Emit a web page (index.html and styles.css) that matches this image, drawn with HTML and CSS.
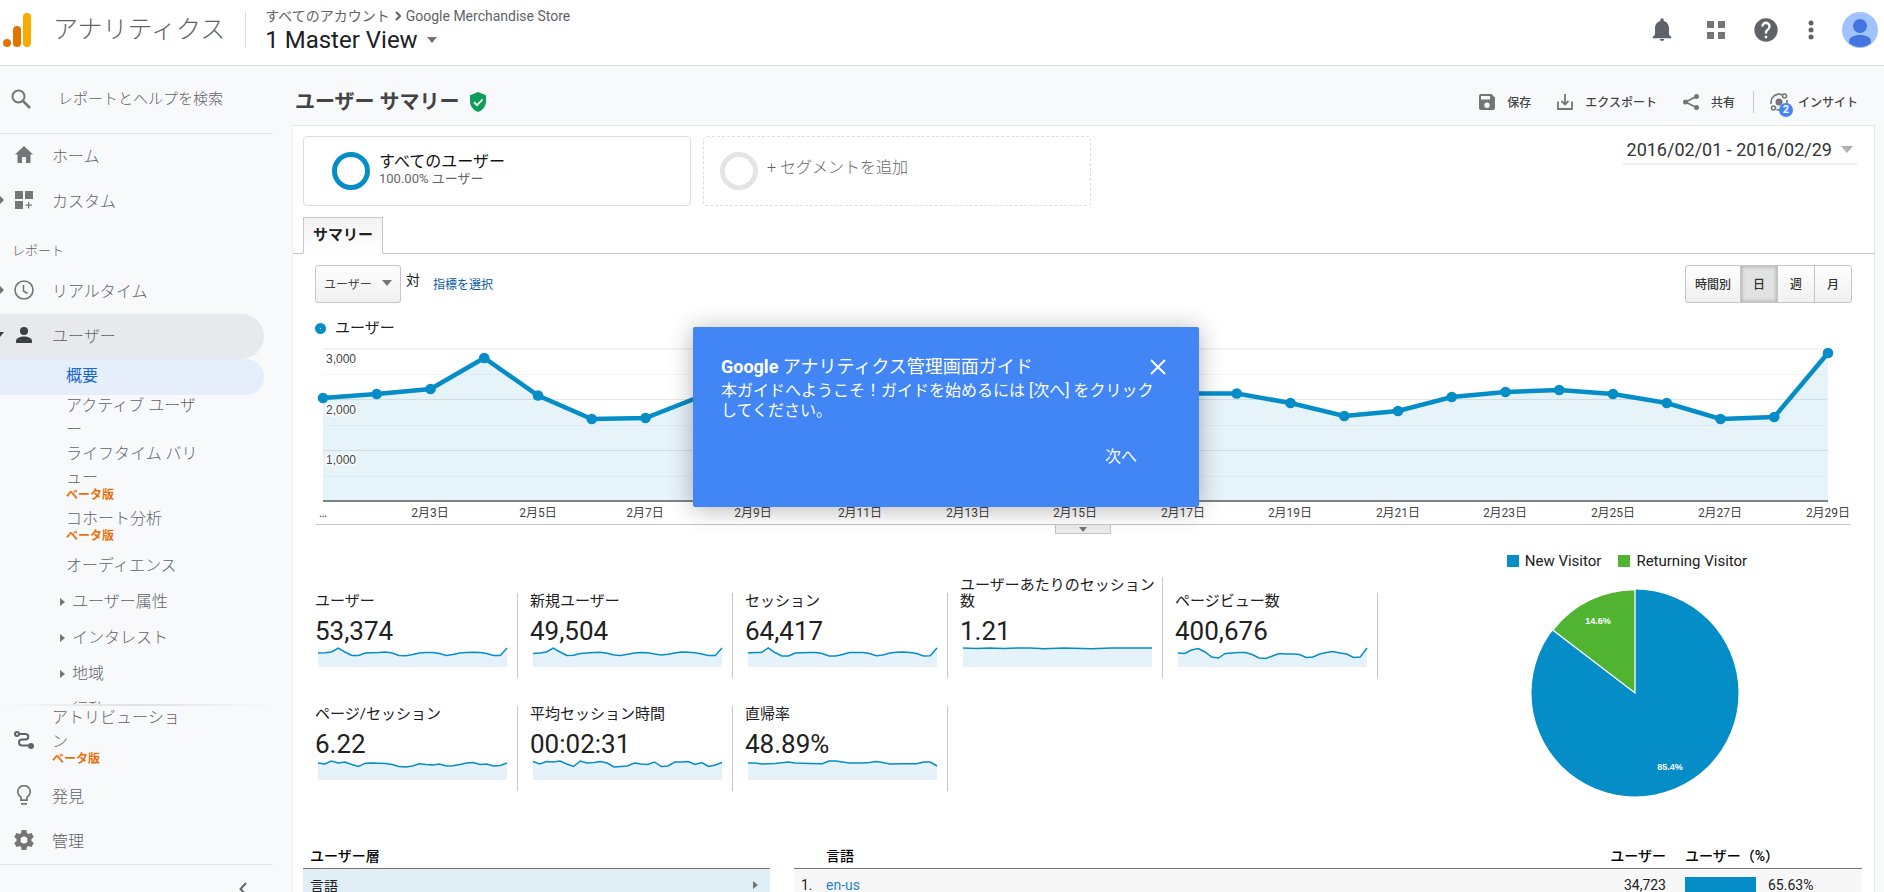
FILE: index.html
```html
<!DOCTYPE html>
<html lang="ja">
<head>
<meta charset="utf-8">
<title>アナリティクス</title>
<link rel="stylesheet" href="styles.css">
</head>
<body>
<header class="topbar">
  <svg class="logo" width="28" height="34" viewBox="0 0 28 34" aria-hidden="true"><rect x="20" y="0" width="8" height="34" rx="4" fill="#f9ab00"/><rect x="10" y="13" width="8" height="21" rx="4" fill="#e37400"/><circle cx="4" cy="30" r="4" fill="#e37400"/></svg>
  <span class="wordmark">アナリティクス</span>
  <div class="account">
    <div class="crumbs"><span>すべてのアカウント</span><svg width="6" height="10" viewBox="0 0 6 10"><path d="M1 1l4 4-4 4" fill="none" stroke="#5f6368" stroke-width="2"/></svg><span>Google Merchandise Store</span></div>
    <button class="view">1 Master View<i class="caret"></i></button>
  </div>
  <div class="top-actions">
    <button aria-label="通知"><svg width="28" height="28" viewBox="0 0 24 24"><path d="M12 21.5c1 0 1.900-.8 1.900-1.700h-3.800c0 .9.900 1.700 1.900 1.700zM18 16v-5.500c0-3.100-1.600-5.600-4.500-6.300v-.7a1.500 1.500 0 0 0-3 0v.7C7.600 4.900 6 7.400 6 10.500V16l-2 2v1h16v-1z"/></svg></button>
    <button aria-label="アプリ"><svg width="18" height="18" viewBox="0 0 18 18"><path d="M0 0h7v7H0zM11 0h7v7h-7zM0 11h7v7H0zM11 11h7v7h-7z" fill="#757575"/></svg></button>
    <button aria-label="ヘルプ"><svg width="28" height="28" viewBox="0 0 24 24"><path d="M12 2a10 10 0 1 0 0 20 10 10 0 0 0 0-20zm1 17h-2v-2h2zm2.070-7.750l-.9.920C13.450 12.900 13 13.500 13 15h-2v-.5c0-1.100.45-2.100 1.170-2.830l1.240-1.260A2 2 0 1 0 10 9H8a4 4 0 1 1 7.070 2.250z"/></svg></button>
    <button aria-label="メニュー"><svg width="6" height="20" viewBox="0 0 6 20"><circle cx="3" cy="3" r="2.500"/><circle cx="3" cy="10" r="2.500"/><circle cx="3" cy="17" r="2.500"/></svg></button>
    <button aria-label="アカウント"><svg width="36" height="36" viewBox="0 0 36 36"><circle cx="18" cy="18" r="18" fill="#a0c3ff"/><circle cx="18" cy="14" r="7" fill="#4374e0"/><path d="M7 30c0-5 5-7 11-7s11 2 11 7v1a17 17 0 0 1-22 0z" fill="#4374e0"/></svg></button>
  </div>
</header>
<div class="shell">
  <nav class="sidebar">
    <label class="search"><svg width="20" height="20" viewBox="0 0 20 20"><g fill="none" stroke="#757575" stroke-width="2"><circle cx="7.500" cy="7.500" r="6"/><path d="M12 12l7 7" stroke-width="2.500"/></g></svg><input type="text" placeholder="レポートとヘルプを検索"></label>
    <div class="nav-list">
      <a class="item" href="#"><i class="exp"></i><span class="ico"><svg width="18" height="17" viewBox="0 0 18 17"><path d="M9 0L0 8.500h2.500V17h4.500v-6h4v6h4.500V8.500H18z"/></svg></span>ホーム</a>
      <a class="item" href="#"><i class="exp right"></i><span class="ico"><svg width="18" height="18" viewBox="0 0 18 18"><path d="M0 0h8v8H0zM10 0h8v8h-8zM0 10h8v8H0zM13 11h1.200v2.500H17V14.700h-2.800v2.800H13v-2.800h-2.500v-1.200H13z"/></svg></span>カスタム</a>
      <div class="group">レポート</div>
      <a class="item" href="#"><i class="exp right"></i><span class="ico"><svg width="20" height="20" viewBox="0 0 20 20"><g fill="none" stroke="#757575"><circle cx="10" cy="10" r="9" stroke-width="1.600"/><path d="M9.500 5v6l4 2.500" stroke-width="1.500"/></g></svg></span>リアルタイム</a>
      <a class="item open" href="#"><i class="exp down"></i><span class="ico"><svg width="16" height="16" viewBox="0 0 16 16"><circle cx="8" cy="4" r="4" fill="#3c4043"/><path d="M0 16v-2c0-2.800 4-4.500 8-4.500s8 1.700 8 4.500v2z" fill="#3c4043"/></svg></span>ユーザー</a>
      <a class="sub current" href="#">概要</a>
      <a class="sub tall first" href="#">アクティブ ユーザー</a>
      <a class="sub tall" href="#">ライフタイム バリュー<span class="beta">ベータ版</span></a>
      <a class="sub tall beta-gap" href="#">コホート分析<span class="beta">ベータ版</span></a>
      <a class="sub beta-gap" href="#">オーディエンス</a>
      <a class="sub more" href="#"><i class="tri"></i>ユーザー属性</a>
      <a class="sub more" href="#"><i class="tri"></i>インタレスト</a>
      <a class="sub more" href="#"><i class="tri"></i>地域</a>
      <a class="sub more" href="#"><i class="tri"></i>行動</a>
    </div>
    <div class="nav-foot">
      <a class="item attribution" href="#"><i class="exp"></i><span class="ico"><svg width="20" height="18" viewBox="0 0 20 18"><g fill="none" stroke="#5f6368" stroke-width="2"><circle cx="3" cy="3" r="2"/><path d="M5 3h6.500a2.500 2.500 0 0 1 0 5.500H8a3 3 0 0 0 0 6h8"/></g><circle cx="17" cy="15" r="3" fill="#5f6368"/></svg></span><span class="wrap">アトリビューション<span class="beta">ベータ版</span></span></a>
      <a class="item" href="#"><i class="exp"></i><span class="ico"><svg width="14" height="20" viewBox="0 0 14 20"><path d="M4 15.200v-3A6.200 6.200 0 1 1 10 12.200v3zM4 18.800h6" fill="none" stroke="#757575" stroke-width="1.700"/></svg></span>発見</a>
      <a class="item" href="#"><i class="exp"></i><span class="ico"><svg width="24" height="24" viewBox="0 0 24 24"><path d="M19.430 12.980c.04-.32.070-.64.070-.98s-.03-.66-.07-.98l2.110-1.650c.19-.15.24-.42.120-.64l-2-3.460c-.12-.22-.39-.3-.61-.22l-2.490 1c-.52-.4-1.080-.73-1.690-.98l-.38-2.650A.49.490 0 0 0 14 2h-4c-.25 0-.46.180-.49.420l-.38 2.650c-.61.25-1.170.59-1.690.98l-2.490-1c-.23-.09-.49 0-.61.220l-2 3.460c-.13.220-.07.490.12.640l2.110 1.650c-.04.32-.07.650-.07.980s.03.660.07.980l-2.110 1.650c-.19.150-.24.420-.12.640l2 3.460c.12.220.39.300.61.220l2.490-1c.52.400 1.080.730 1.690.980l.38 2.650c.03.240.24.420.49.420h4c.25 0 .46-.18.49-.42l.38-2.650c.61-.25 1.170-.59 1.690-.98l2.490 1c.23.090.49 0 .61-.22l2-3.460c.12-.22.070-.49-.12-.64zM12 15.500a3.500 3.500 0 1 1 0-7 3.500 3.500 0 0 1 0 7z"/></svg></span>管理</a>
      <button class="collapse" aria-label="折りたたむ"><svg width="8" height="14" viewBox="0 0 8 14"><path d="M7 1L1.500 7 7 13" fill="none" stroke="#5f6368" stroke-width="2"/></svg></button>
    </div>
  </nav>
  <main class="main">
    <div class="titlebar">
      <h1>ユーザー サマリー</h1>
      <svg width="16" height="20" viewBox="0 0 16 20"><path d="M8 0l8 3.200v6.300C16 14.500 12.500 18.500 8 20c-4.500-1.500-8-5.500-8-10.500V3.200z" fill="#0f9d58"/><path d="M4 10.200l3 3 5.500-5.700" fill="none" stroke="#fff" stroke-width="1.800"/></svg>
      <div class="tools">
        <button><svg width="16" height="16" viewBox="0 0 16 16"><path fill-rule="evenodd" d="M2 0h10.500L16 3.500V14a2 2 0 0 1-2 2H2a2 2 0 0 1-2-2V2a2 2 0 0 1 2-2zm0 2v3.500h9V2zm6 6.500a2.700 2.700 0 1 0 0 5.400 2.700 2.700 0 0 0 0-5.400z"/></svg>保存</button>
        <button><svg width="16" height="16" viewBox="0 0 16 16"><path d="M1 7.500V15h14V7.500M8 0v10.500M4.500 7L8 10.500 11.500 7" fill="none" stroke="#757575" stroke-width="1.800"/></svg>エクスポート</button>
        <button><svg width="16" height="16" viewBox="0 0 16 16"><path d="M13.500 2.500L2.500 8l11 5.500" fill="none" stroke="#757575" stroke-width="1.600"/><circle cx="13.500" cy="2.500" r="2.500"/><circle cx="2.500" cy="8" r="2.500"/><circle cx="13.500" cy="13.500" r="2.500"/></svg>共有</button>
        <button class="insight"><span class="pulse"><svg width="18" height="18" viewBox="0 0 18 18"><circle cx="9" cy="9" r="3.500"/><g fill="none" stroke="#757575" stroke-width="1.600"><path d="M12 1.800A8 8 0 0 0 1.200 11M6.500 16.500A8 8 0 0 0 16.800 7"/><circle cx="14.500" cy="3" r="2"/><circle cx="3.500" cy="15" r="2"/></g></svg><b>2</b></span>インサイト</button>
      </div>
    </div>
    <div class="panel">
      <div class="segments">
        <button class="segment"><i class="ring"></i><span class="seg-name">すべてのユーザー<small>100.00% ユーザー</small></span></button>
        <button class="segment add"><i class="ring"></i><span>+ セグメントを追加</span></button>
        <button class="dates">2016/02/01 - 2016/02/29<i class="caret"></i></button>
      </div>
      <div class="tabs"><button class="tab">サマリー</button></div>
      <div class="controls">
        <button class="metric-pick">ユーザー<i class="caret"></i></button>
        <span class="versus">対</span>
        <a class="pick" href="#">指標を選択</a>
        <div class="grain"><button>時間別</button><button class="on">日</button><button>週</button><button>月</button></div>
      </div>
      <div class="legend"><i></i>ユーザー</div>
      <svg class="chart" viewBox="0 0 1534 186" role="img" aria-label="ユーザー">
        <defs><marker id="dot" markerUnits="userSpaceOnUse" markerWidth="12" markerHeight="12" refX="6" refY="6"><circle cx="6" cy="6" r="5.300" fill="#058dc7"/></marker></defs>
        <path d="M7 11H1512" stroke="#f2f2f2" stroke-width="2"/>
        <path d="M7 36.500H1512M7 87.500H1512M7 138.500H1512" stroke="#f6f6f6"/>
        <path d="M7 61.500H1512M7 112.500H1512" stroke="#e6e6e6"/>
        <path d="M7 60L60.750 56 114.500 51 168.250 20 222 57.500 275.750 81 329.500 80 383.250 59 437 58 490.750 57 544.500 56 598.250 62 652 76 705.750 77 759.500 68 813.250 59 867 55.500 920.750 55.500 974.500 65 1028.250 78 1082 73 1135.750 59 1189.500 54 1243.250 52 1297 56 1350.750 65 1404.500 81 1458.250 79 1512 15V163H7z" fill="#058dc7" fill-opacity=".1"/>
        <path d="M7 163H1512" stroke="#7c8285" stroke-width="2"/>
        <polyline points="7,60 60.750,56 114.500,51 168.250,20 222,57.500 275.750,81 329.500,80 383.250,59 437,58 490.750,57 544.500,56 598.250,62 652,76 705.750,77 759.500,68 813.250,59 867,55.500 920.750,55.500 974.500,65 1028.250,78 1082,73 1135.750,59 1189.500,54 1243.250,52 1297,56 1350.750,65 1404.500,81 1458.250,79 1512,15" fill="none" stroke="#058dc7" stroke-width="4.500" marker-start="url(#dot)" marker-mid="url(#dot)" marker-end="url(#dot)"/>
        <g class="ylab"><text x="10" y="25">3,000</text><text x="10" y="76">2,000</text><text x="10" y="126">1,000</text></g>
        <g class="xlab"><text x="7" y="179">…</text><text x="114" y="179">2月3日</text><text x="222" y="179">2月5日</text><text x="329" y="179">2月7日</text><text x="437" y="179">2月9日</text><text x="544" y="179">2月11日</text><text x="652" y="179">2月13日</text><text x="759" y="179">2月15日</text><text x="867" y="179">2月17日</text><text x="974" y="179">2月19日</text><text x="1082" y="179">2月21日</text><text x="1189" y="179">2月23日</text><text x="1297" y="179">2月25日</text><text x="1404" y="179">2月27日</text><text x="1512" y="179">2月29日</text></g>
      </svg>
      <div class="fold"><button aria-label="展開"><i class="caret"></i></button></div>
      <div class="overview">
        <div class="cards">
          <div class="card"><h2>ユーザー</h2><strong>53,374</strong><svg viewBox="0 0 28 20" preserveAspectRatio="none"><path class="area" d="M0 6L1 5.700 2 5 3 1 4 5 5 8.500 6 8.500 7 6 8 5.800 9 5.500 10 5 11 6 12 8.500 13 8.700 14 7.500 15 6 16 5.500 17 5.500 18 6.500 19 8.500 20 7.500 21 6 22 5.500 23 5.200 24 5.500 25 6.500 26 8.500 27 8.500 28 1V20H0z"/><path class="line" d="M0 6L1 5.700 2 5 3 1 4 5 5 8.500 6 8.500 7 6 8 5.800 9 5.500 10 5 11 6 12 8.500 13 8.700 14 7.500 15 6 16 5.500 17 5.500 18 6.500 19 8.500 20 7.500 21 6 22 5.500 23 5.200 24 5.500 25 6.500 26 8.500 27 8.500 28 1"/></svg></div>
          <div class="card"><h2>新規ユーザー</h2><strong>49,504</strong><svg viewBox="0 0 28 20" preserveAspectRatio="none"><path class="area" d="M0 6.500L1 6 2 5 3 1 4 5 5 8.500 6 8.200 7 6.500 8 6 9 5.500 10 5.200 11 6.300 12 8 13 8.500 14 7.300 15 6 16 5.500 17 5.700 18 7 19 8 20 7.200 21 6 22 5 23 5.200 24 5.800 25 7 26 8.500 27 8.500 28 1V20H0z"/><path class="line" d="M0 6.500L1 6 2 5 3 1 4 5 5 8.500 6 8.200 7 6.500 8 6 9 5.500 10 5.200 11 6.300 12 8 13 8.500 14 7.300 15 6 16 5.500 17 5.700 18 7 19 8 20 7.200 21 6 22 5 23 5.200 24 5.800 25 7 26 8.500 27 8.500 28 1"/></svg></div>
          <div class="card"><h2>セッション</h2><strong>64,417</strong><svg viewBox="0 0 28 20" preserveAspectRatio="none"><path class="area" d="M0 6L1 5.500 2 5.500 3 1 4 5.500 5 9 6 9 7 6 8 5.800 9 5.500 10 5.500 11 6.500 12 9 13 9 14 7.500 15 5.500 16 5.500 17 5.500 18 6.500 19 8.700 20 8 21 6 22 5.300 23 5 24 5.500 25 6.500 26 9 27 8.700 28 1V20H0z"/><path class="line" d="M0 6L1 5.500 2 5.500 3 1 4 5.500 5 9 6 9 7 6 8 5.800 9 5.500 10 5.500 11 6.500 12 9 13 9 14 7.500 15 5.500 16 5.500 17 5.500 18 6.500 19 8.700 20 8 21 6 22 5.300 23 5 24 5.500 25 6.500 26 9 27 8.700 28 1"/></svg></div>
          <div class="card"><h2>ユーザーあたりのセッション数</h2><strong>1.21</strong><svg viewBox="0 0 28 20" preserveAspectRatio="none"><path class="area" d="M0 1L2 1.500 4 1 6 1.500 8 1 10 1 12 1.700 15 1 19 1.700 22 1H28V20H0z"/><path class="line" d="M0 1L2 1.500 4 1 6 1.500 8 1 10 1 12 1.700 15 1 19 1.700 22 1H28"/></svg></div>
          <div class="card"><h2>ページビュー数</h2><strong>400,676</strong><svg viewBox="0 0 28 20" preserveAspectRatio="none"><path class="area" d="M0 6L1 6.500 2 3 3 1.500 4 5 5 10 6 11 7 6.500 8 6 9 5.500 10 5.500 11 7.500 12 11 13 11.500 14 9 15 6.500 16 7 17 7 18 7.500 19 10.500 20 10 21 7 22 5.500 23 4.500 24 6 25 7 26 10.500 27 10 28 1V20H0z"/><path class="line" d="M0 6L1 6.500 2 3 3 1.500 4 5 5 10 6 11 7 6.500 8 6 9 5.500 10 5.500 11 7.500 12 11 13 11.500 14 9 15 6.500 16 7 17 7 18 7.500 19 10.500 20 10 21 7 22 5.500 23 4.500 24 6 25 7 26 10.500 27 10 28 1"/></svg></div>
          <div class="card"><h2>ページ/セッション</h2><strong>6.22</strong><svg viewBox="0 0 28 20" preserveAspectRatio="none"><path class="area" d="M0 3L1 4 2 1 3 3 4 2 5 4.500 6 6.500 7 3.200 8 3 10 3.500 11 4.500 12 6.500 13 7 14 6 15 3.800 16 4.500 17 5 18 4 19 6 20 5.800 21 4.500 22 3 23 2.500 24 4.500 25 4 26 6 27 5.500 28 3V20H0z"/><path class="line" d="M0 3L1 4 2 1 3 3 4 2 5 4.500 6 6.500 7 3.200 8 3 10 3.500 11 4.500 12 6.500 13 7 14 6 15 3.800 16 4.500 17 5 18 4 19 6 20 5.800 21 4.500 22 3 23 2.500 24 4.500 25 4 26 6 27 5.500 28 3"/></svg></div>
          <div class="card"><h2>平均セッション時間</h2><strong>00:02:31</strong><svg viewBox="0 0 28 20" preserveAspectRatio="none"><path class="area" d="M0 1.500L1 4 2 1.500 3 2 4 1 5 4 6 6.500 7 1 8 3 9 2.500 10 1.500 11 3 12 7 13 6.500 14 6 15 3 16 4 17 4.500 18 2 19 6.500 20 6 21 2 22 2 23 1.500 24 4.500 25 2.500 26 6.500 27 5 28 2.500V20H0z"/><path class="line" d="M0 1.500L1 4 2 1.500 3 2 4 1 5 4 6 6.500 7 1 8 3 9 2.500 10 1.500 11 3 12 7 13 6.500 14 6 15 3 16 4 17 4.500 18 2 19 6.500 20 6 21 2 22 2 23 1.500 24 4.500 25 2.500 26 6.500 27 5 28 2.500"/></svg></div>
          <div class="card"><h2>直帰率</h2><strong>48.89%</strong><svg viewBox="0 0 28 20" preserveAspectRatio="none"><path class="area" d="M0 3L1 3 2 4 4 3.500 6 2 7 3 9 3.500 11 3.800 12 1 13 1 15 3 17 3 18 2.500 19 1.500 20 2.500 21 4 23 3.800 25 3.800 26 2 27 2 28 6V20H0z"/><path class="line" d="M0 3L1 3 2 4 4 3.500 6 2 7 3 9 3.500 11 3.800 12 1 13 1 15 3 17 3 18 2.500 19 1.500 20 2.500 21 4 23 3.800 25 3.800 26 2 27 2 28 6"/></svg></div>
        </div>
        <div class="visitors">
          <div class="keys"><span><i class="new"></i>New Visitor</span><span><i class="ret"></i>Returning Visitor</span></div>
          <svg width="208" height="208" viewBox="-104 -104 208 208"><circle r="103.500" fill="#058dc7"/><path d="M0 0V-103.500A103.500 103.500 0 0 0 -82.200 -62.900z" fill="#50b432" stroke="#fff" stroke-width="1.300"/><g class="pct"><text x="-37" y="-69">14.6%</text><text x="35" y="77">85.4%</text></g></svg>
        </div>
      </div>
      <div class="tables">
        <table class="dims"><thead><tr><th>ユーザー層</th></tr></thead><tbody><tr><td><span>言語<i class="tri"></i></span></td></tr></tbody></table>
        <table class="langs"><thead><tr><th class="n"></th><th>言語</th><th class="num">ユーザー</th><th class="share">ユーザー（%）</th></tr></thead><tbody><tr><td class="n">1.</td><td><a href="#">en-us</a></td><td class="num">34,723</td><td class="share"><span><i class="bar"></i>65.63%</span></td></tr></tbody></table>
      </div>
    </div>
  </main>
</div>
<div class="guide" role="dialog" aria-label="ガイド">
  <div class="guide-head"><h2><b>Google</b> アナリティクス管理画面ガイド</h2><button aria-label="閉じる"><svg width="16" height="16" viewBox="0 0 16 16"><path d="M1 1l14 14M15 1L1 15" stroke="#fff" stroke-width="2"/></svg></button></div>
  <p>本ガイドへようこそ！ガイドを始めるには [次へ] をクリックしてください。</p>
  <button class="next">次へ</button>
</div>
</body>
</html>
```
FILE: styles.css
```css
* { box-sizing: border-box; }
body {
  margin: 0; height: 100vh; overflow: hidden; display: flex; flex-direction: column;
  font-family: Roboto, "Noto Sans CJK JP", sans-serif; font-size: 14px; color: #212121; background: #f8f9fb;
}
button { font: inherit; color: inherit; border: 0; background: none; padding: 0; display: flex; align-items: center; }
a { text-decoration: none; color: inherit; }
svg { display: block; flex: none; fill: #5f6368; }
i { flex: none; }
h1, h2, p { margin: 0; font-weight: 400; }
.caret { border: 5px solid transparent; border-top: 6px solid #757575; border-bottom: 0; }

.topbar { display: flex; align-items: center; flex: none; height: 66px; padding: 0 6px 6px 3px; background: #fff; border-bottom: 1px solid #d8dbdf; }
.wordmark { margin-left: 22px; font-size: 25px; line-height: 36px; color: #5f6368; font-weight: 300; }
.account { margin-left: 20px; padding-left: 19px; border-left: 1px solid #dadce0; }
.account { height: 36px; display: flex; flex-direction: column; justify-content: center; }
.crumbs { display: flex; align-items: center; gap: 5px; line-height: 20px; color: #5f6368; }
.view { gap: 9px; font-size: 24px; line-height: 28px; color: #202124; }
.top-actions { margin-left: auto; display: flex; align-items: center; }
.top-actions button:nth-child(2) { margin-left: 31px; }
.top-actions button:nth-child(3) { margin-left: 27px; }
.top-actions button:nth-child(4) { margin-left: 28px; }
.top-actions button:nth-child(5) { margin-left: 28px; }

.shell { flex: 1; min-height: 0; display: flex; }
.sidebar { flex: none; width: 292px; display: flex; flex-direction: column; color: #5f6368; font-size: 16px; font-weight: 300; }
.search { flex: none; display: flex; align-items: center; gap: 27px; width: 273px; height: 68px; padding: 0 0 2px 11px; border-bottom: 1px solid #e0e2e4; }
.search input { flex: 1; min-width: 0; border: 0; padding: 0; background: none; font: inherit; font-size: 15px; color: #616161; }
.search input::placeholder { color: #616161; }
.nav-list { flex: 1; min-height: 0; overflow: hidden; width: 273px; padding-right: 9px; }
.nav-list svg, .nav-foot svg { fill: #757575; }
.item { display: flex; align-items: center; height: 45px; padding-bottom: 4px; }
.exp { width: 0; margin-right: 8px; border: 4px solid transparent; border-width: 4px 0; }
.exp.right { border-left: 4px solid #757575; margin-right: 4px; }
.exp.down { border: 4px solid transparent; border-top: 5px solid #3c4043; border-bottom: 0; margin: 0 4px 0 -4px; }
.ico { width: 31px; margin-right: 13px; display: flex; justify-content: center; }
.group { height: 45px; line-height: 54px; padding-left: 12px; font-size: 13px; }
.open { background: #e8e9ec; border-radius: 0 23px 23px 0; }
.sub { display: flex; align-items: center; height: 36px; padding-left: 66px; line-height: 24px; }
.current { background: #e6eefc; color: #1967d2; border-radius: 0 18px 18px 0; padding-bottom: 2px; font-weight: 400; }
.tall { display: block; height: auto; padding-right: 56px; }
.first { margin-top: -1px; }
.beta { display: block; color: #e8710a; font-size: 12px; font-weight: 700; line-height: 10px; }
.beta-gap { margin-top: 7px; }
.more { padding-left: 60px; gap: 7px; }
.tri { border: 4px solid transparent; border-left: 5px solid #757575; border-right: 0; }
.nav-foot { flex: none; width: 273px; border-top: 2px solid; border-image: linear-gradient(90deg, #f8f9fb, #dfe1e3 50%, #f8f9fb) 1; }
.attribution { height: 68px; align-items: flex-start; padding-bottom: 0; }
.attribution .ico { margin-top: 25px; }
.wrap { width: 128px; line-height: 24px; }
.wrap .beta { line-height: 10px; }
.collapse { width: 100%; height: 28px; align-items: flex-start; justify-content: flex-end; padding: 17px 26px 0 0; border-top: 1px solid #dfe1e3; overflow: hidden; }

.main { flex: 1; min-width: 0; display: flex; flex-direction: column; padding-right: 9px; }
.titlebar { flex: none; display: flex; align-items: center; gap: 10px; height: 59px; padding: 12px 17px 0 3px; }
h1 { font-size: 20px; font-weight: 700; color: #444; line-height: 28px; }
.tools { margin-left: auto; display: flex; align-items: center; gap: 26px; font-size: 12px; font-weight: 500; color: #444; }
.tools button { gap: 12px; }
.tools svg { fill: #757575; }
.tools .insight { gap: 10px; margin-left: -8px; padding-left: 16px; border-left: 1px solid #c8c8c8; height: 22px; }
.pulse { position: relative; }
.pulse b { position: absolute; left: 9px; top: 10px; width: 14px; height: 14px; border-radius: 7px; background: #4285f4; color: #fff; font-size: 11px; line-height: 14px; text-align: center; }
.panel { flex: 1; min-height: 0; overflow: hidden; background: #fff; border: 1px solid #e4e6e8; border-bottom: 0; border-left-color: #eef0f2; }

.segments { display: flex; align-items: flex-start; gap: 12px; padding: 10px 17px 0 10px; }
.segment { width: 388px; height: 70px; padding-left: 28px; border: 1px solid #dedede; border-radius: 4px; font-size: 16px; color: #111; text-align: left; gap: 9px; }
.ring { width: 38px; height: 38px; border: 5px solid #058dc7; border-radius: 50%; }
.seg-name { line-height: 20px; padding-bottom: 4px; }
.seg-name small { display: block; font-size: 13px; line-height: 14px; color: #666; }
.add { padding-left: 16px; border-style: dashed; color: #666; }
.add .ring { border-color: #e4e4e4; }
.add span { padding-bottom: 11px; font-weight: 300; }
.dates { margin-left: auto; padding: 0 4px; gap: 9px; height: 29px; border-bottom: 2px solid #eee; font-size: 18px; color: #333; }
.dates .caret { border-width: 7px 6px 0; border-top-color: #b0b0b0; }
.tabs { display: flex; padding-left: 10px; margin-top: 11px; border-bottom: 1px solid #c6c6c6; }
.tab { height: 37px; padding: 0 9px 4px; margin-bottom: -1px; border: 1px solid #c6c6c6; border-bottom-color: #fff; background: linear-gradient(#f2f2f2, #fff); font-size: 15px; font-weight: 700; }
.controls { display: flex; align-items: center; padding: 11px 22px 0; font-size: 12px; }
.metric-pick { width: 86px; height: 38px; padding: 0 8px 2px; justify-content: space-between; border: 1px solid #c6c6c6; border-radius: 3px; background: linear-gradient(#fdfdfd, #f0f0f0); color: #444; }
.versus { margin-left: 5px; padding-bottom: 11px; font-size: 14px; }
.pick { margin-left: 13px; padding-bottom: 2px; color: #0b5aa2; }
.grain { margin-left: auto; display: flex; border: 1px solid #c6c6c6; border-radius: 3px; background: linear-gradient(#fff, #f0f0f0); font-weight: 500; }
.grain button { width: 37px; height: 36px; padding-bottom: 2px; justify-content: center; color: #333; }
.grain button + button { border-left: 1px solid #c6c6c6; }
.grain button:first-child { width: 54px; }
.grain .on { background: #e2e2e2; box-shadow: inset 0 0 4px #999; }
.legend { display: flex; align-items: center; gap: 9px; margin: 15px 0 0 22px; height: 20px; line-height: 20px; font-size: 15px; }
.legend i { width: 11px; height: 11px; border-radius: 50%; border: 5px solid #058dc7; }
.chart { margin: 0 24px 0 23px; width: calc(100% - 47px); height: auto; }
.chart text { fill: #444; font-size: 12px; }
.ylab text { paint-order: stroke; stroke: #fff; stroke-width: 3px; stroke-opacity: .8; }
.ylab { font-family: "Liberation Sans", Arial, sans-serif; }
.xlab { text-anchor: middle; }
.fold { display: flex; margin: 0 24px 0 23px; padding-left: 739px; height: 10px; border-top: 1px solid #c6c6c6; }
.fold button { width: 56px; height: 9px; justify-content: center; border: 1px solid #c6c6c6; border-top: 0; background: #ececec; }
.fold .caret { border-width: 5px 4px 0; }

.overview { display: flex; padding-top: 16px; }
.cards { flex: none; display: grid; grid-template-columns: repeat(5, 215px); row-gap: 28px; padding: 43px 0 0 10px; align-items: end; align-content: start; }
.card { padding-left: 12px; border-right: 1px solid #c6c6c6; }
.cards .card:nth-child(4) { margin-top: -16px; }
.card h2 { font-size: 15px; line-height: 16px; }
.card strong { display: block; margin-top: 6px; font-size: 26px; font-weight: 400; line-height: 32px; }
.card svg { width: 189px; height: 20px; margin: 0 0 11px 3px; overflow: visible; }
.area { fill: #e5f2f9; }
.line { fill: none; stroke: #058dc7; stroke-width: 1.500px; vector-effect: non-scaling-stroke; }
.visitors { flex: 1; display: flex; flex-direction: column; align-items: center; gap: 18px; padding: 1px 0 0 18px; }
.keys { display: flex; gap: 17px; margin-right: 16px; font-size: 15px; line-height: 20px; }
.keys span { display: flex; align-items: center; gap: 6px; }
.keys i { width: 12px; height: 12px; }
.new { background: #058dc7; }
.ret { background: #50b432; }
.pct text { fill: #fff; font: 700 9px "Liberation Sans", Arial, sans-serif; text-anchor: middle; }

.tables { display: flex; gap: 24px; margin-top: 45px; padding: 0 12px 0 10px; }
table { border-collapse: collapse; align-self: flex-start; font-size: 14px; }
th { padding: 0 0 0 7px; height: 26px; text-align: left; font-weight: 500; color: #000; border-bottom: 1px solid #777; }
td { padding: 0 0 0 7px; height: 34px; }
.dims { width: 467px; }
.dims td { background: #e0eef5; }
.dims td span { display: flex; align-items: center; justify-content: space-between; padding-right: 12px; }
.langs { flex: 1; }
.langs td { background: #f7f7f7; }
.langs a { color: #2a84c6; }
.langs .n { width: 25px; }
.langs .num { width: 200px; text-align: right; }
.langs .share { width: 196px; padding-left: 19px; }
.share span { display: flex; align-items: center; gap: 12px; }
.bar { width: 71px; height: 17px; background: #058dc7; }

.guide { position: absolute; left: calc(50% - 249px); top: 327px; width: 506px; height: 180px; padding: 28px 28px 0; background: #4285f4; color: #fff; border-radius: 2px; box-shadow: 0 2px 24px rgba(0, 0, 0, .3); font-size: 16px; }
.guide-head { display: flex; align-items: center; justify-content: space-between; padding-right: 5px; }
.guide h2 { font-size: 18px; line-height: 24px; }
.guide p { margin-top: 2px; padding-right: 12px; line-height: 20px; }
.next { margin: 24px 34px 0 auto; line-height: 24px; }
```
